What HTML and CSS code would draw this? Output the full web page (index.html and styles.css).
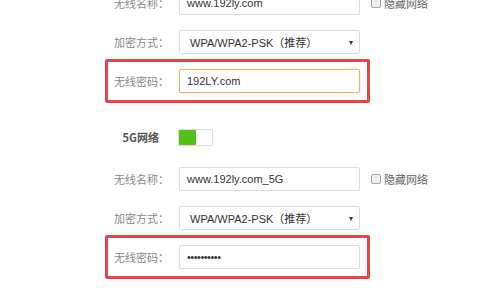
FILE: index.html
```html
<!DOCTYPE html>
<html lang="zh-CN">
<head>
    <meta charset="UTF-8">
    <meta name="viewport" content="width=device-width, initial-scale=1.0">
    <title>无线设置</title>
    <link rel="stylesheet" href="styles.css">
</head>
<body>
    <div class="wifi-form">
        <!-- 2.4G -->
        <div class="row">
            <label class="label">无线名称：</label>
            <input class="field" type="text" value="www.192ly.com">
            <label class="hide-check"><span class="box"></span>隐藏网络</label>
        </div>
        <div class="row">
            <label class="label">加密方式：</label>
            <div class="field select">WPA/WPA2-PSK（推荐）<span class="arrow"></span></div>
        </div>
        <div class="row marked">
            <label class="label">无线密码：</label>
            <input class="field focus" type="text" value="192LY.com">
        </div>

        <!-- 5G -->
        <div class="row section">
            <span class="label title">5G网络</span>
            <span class="switch"><span class="on"></span></span>
        </div>
        <div class="row">
            <label class="label">无线名称：</label>
            <input class="field" type="text" value="www.192ly.com_5G">
            <label class="hide-check"><span class="box"></span>隐藏网络</label>
        </div>
        <div class="row">
            <label class="label">加密方式：</label>
            <div class="field select">WPA/WPA2-PSK（推荐）<span class="arrow"></span></div>
        </div>
        <div class="row marked">
            <label class="label">无线密码：</label>
            <input class="field pass" type="password" value="1234567890">
        </div>
    </div>
</body>
</html>
```

FILE: styles.css
```css
body {
    margin: 0;
    background-color: #fff;
    font-family: "Liberation Sans", "Noto Sans CJK SC", sans-serif;
    font-size: 11px;
    color: #333;
}

.wifi-form {
    margin: -9px 0 0 97px;
    width: 340px;
}

.row {
    position: relative;
    display: flex;
    align-items: center;
    height: 24px;
    margin-bottom: 15px;
}

.label {
    width: 72px;
    margin-right: 10px;
    text-align: right;
    color: #888;
    font-family: "Noto Sans CJK SC", sans-serif;
}

.field {
    box-sizing: border-box;
    width: 181px;
    height: 24px;
    padding: 0 7px;
    border: 1px solid #ddd;
    border-radius: 2px;
    font-family: "Liberation Sans", "Noto Sans CJK SC", sans-serif;
    font-size: 11px;
    color: #333;
    outline: none;
}

.field.focus {
    border-color: #f3ab72;
    box-shadow: 0 0 2px rgba(243, 150, 80, 0.45);
}

.field.pass {
    letter-spacing: -0.5px;
}

.select {
    position: relative;
    display: flex;
    align-items: center;
    padding-left: 10px;
}

.select .arrow {
    position: absolute;
    right: 6px;
    top: 10px;
    border-left: 2.5px solid transparent;
    border-right: 2.5px solid transparent;
    border-top: 4px solid #333;
}

.hide-check {
    display: flex;
    align-items: center;
    margin-left: 11px;
    color: #666;
    font-family: "Noto Sans CJK SC", sans-serif;
}

.hide-check .box {
    box-sizing: border-box;
    width: 10px;
    height: 10px;
    margin-right: 3px;
    border: 1px solid #aaa;
    border-radius: 2px;
    background-color: #eee;
}

.marked::before {
    content: "";
    position: absolute;
    left: 8px;
    top: -10px;
    width: 265px;
    height: 44px;
    box-sizing: border-box;
    border: 3px solid #e8454b;
    border-radius: 2px;
}

.section {
    margin-top: 32px;
    margin-bottom: 18px;
}

.title {
    box-sizing: border-box;
    margin-right: 9px;
    padding-right: 10px;
    font-weight: bold;
    color: #555;
}

.switch {
    box-sizing: border-box;
    display: flex;
    width: 35px;
    height: 17px;
    border: 1px solid #ddd;
    border-radius: 2px;
    background-color: #fff;
}

.switch .on {
    width: 17px;
    background-color: #55bf1a;
    border-radius: 1px;
}
```
